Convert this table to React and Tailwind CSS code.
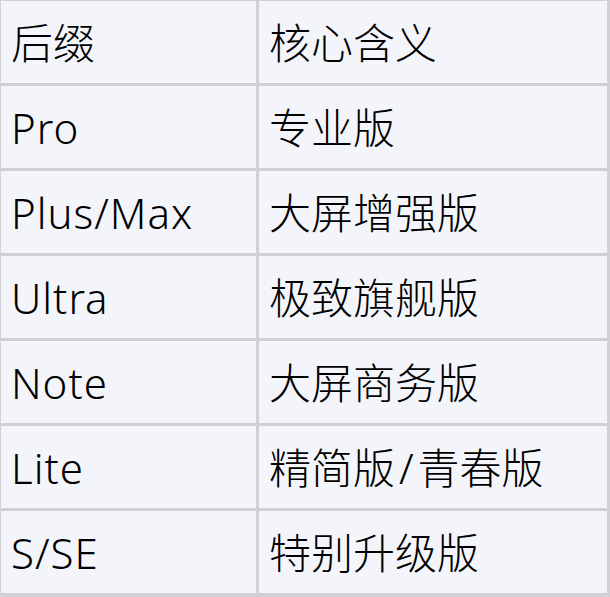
import React from "react";

const rows = [
  ["后缀", "核心含义", true],
  ["Pro", "专业版"],
  ["Plus/Max", "大屏增强版"],
  ["Ultra", "极致旗舰版"],
  ["Note", "大屏商务版"],
  ["Lite", "精简版/青春版"],
  ["S/SE", "特别升级版"],
];

function Cjk({ text }) {
  const parts = text.split("/");
  return parts.map((p, i) => (
    <React.Fragment key={i}>
      {i > 0 && <span className="px-[4px]">/</span>}
      {p}
    </React.Fragment>
  ));
}

export default function App() {
  return (
    <div
      className="w-[610px] h-[597px] bg-[#d1d1d5] pt-[1px] pl-[1px] pr-[3px] pb-[4px]"
      style={{ fontFamily: '"Noto Sans", "Noto Sans CJK SC", sans-serif' }}
    >
      <div className="grid grid-cols-[255px_1fr] auto-rows-[82px] gap-[3px] h-full">
        {rows.map(([a, b, head], i) => (
          <React.Fragment key={i}>
            <div
              className={
                head
                  ? "bg-[#f4f5fa] flex items-center pl-[10px] pt-[2px] text-[42px] font-light text-black leading-none"
                  : "bg-[#f4f5fa] flex items-center pl-[10px] pt-[2px] text-[42px] font-[350] tracking-[1px] text-black leading-none"
              }
            >
              {a}
            </div>
            <div className="bg-[#f4f5fa] flex items-center pl-[10px] pt-[2px] text-[42px] font-light text-black leading-none whitespace-pre">
              <Cjk text={b} />
            </div>
          </React.Fragment>
        ))}
      </div>
    </div>
  );
}
